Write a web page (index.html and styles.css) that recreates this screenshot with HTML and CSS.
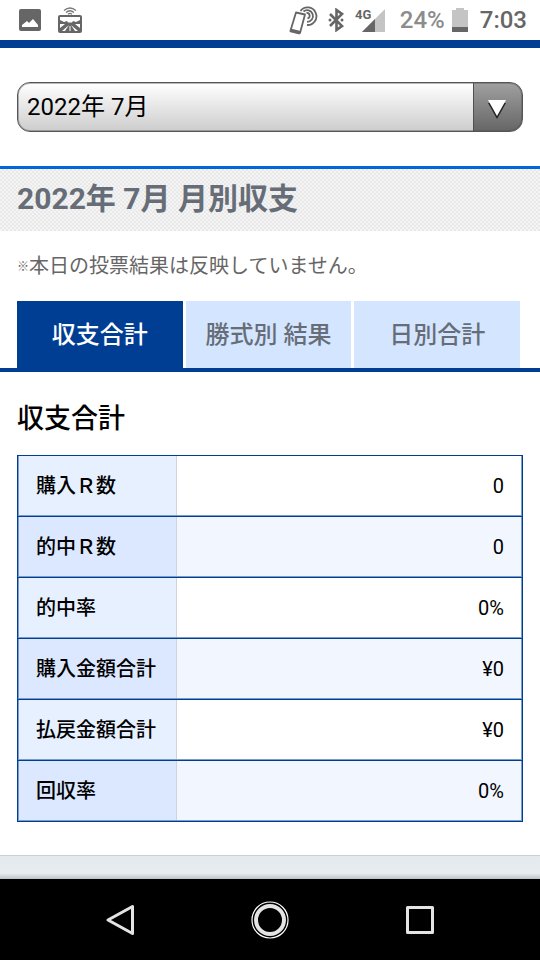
FILE: index.html
```html
<!DOCTYPE html>
<html lang="ja">
<head>
    <meta charset="UTF-8">
    <meta name="viewport" content="width=device-width, initial-scale=1.0">
    <title>月別収支</title>
    <link rel="stylesheet" href="styles.css">
</head>
<body>
    <div class="status-bar">
        <div class="status-left">
            <svg width="22" height="22" viewBox="0 0 22 22">
                <rect width="22" height="22" rx="2" fill="#666"/>
                <path d="M3 18v-2l5-4 2 2 4-4 5 6v2z" fill="#fff"/>
            </svg>
            <svg width="24" height="26" viewBox="0 0 24 26">
                <g fill="none" stroke="#777" stroke-width="1.3">
                    <path d="M6 3.500Q12-1.500 18 3.500M8 5.500Q12 2 16 5.500M10 7.300Q12 5.500 14 7.300"/>
                </g>
                <rect x="1" y="9" width="22" height="16" rx="1" fill="#666" stroke="#666" stroke-width="2"/>
                <path d="M2 10h20v3l-4 2-3-1-1 1.500h-4L9 14l-3 1-4-2z" fill="#fff"/>
                <path d="M2 17l5 0-5 4zM22 17h-5l5 4zM4 24l7-6-4 6zM20 24l-7-6 4 6zM11.500 19h1v5h-1z" fill="#fff"/>
            </svg>
        </div>
        <div class="status-right">
            <svg width="30" height="30" viewBox="0 0 30 30">
                <g fill="none" stroke="#666" stroke-width="1.8" stroke-linejoin="round">
                    <path d="M7 7.500L16 9.500L11 28L1.500 25.500z"/>
                    <path d="M11.500 6A8.800 8.800 0 1 1 18 20"/>
                    <path d="M14.500 6.500A5.800 5.800 0 1 1 18 16.800"/>
                    <path d="M17.500 8A2.800 2.800 0 0 1 18.500 13.500"/>
                </g>
                <path d="M1.500 23.500l10 2.500-1 3.500-10-2.500z" fill="#666"/>
            </svg>
            <svg class="bluetooth" width="16" height="24" viewBox="0 0 16 24">
                <path d="M2 6l12 12-5.500 4V2L14 6 2 18" fill="none" stroke="#666" stroke-width="2.600"/>
                <circle cx="2" cy="12" r="1.500" fill="#666"/>
                <circle cx="14" cy="12" r="1.500" fill="#666"/>
            </svg>
            <svg class="signal" width="31" height="26" viewBox="0 0 31 26">
                <path d="M30 2v23H7z" fill="#c4c4c4"/>
                <path d="M20 12v13H7z" fill="#666"/>
                <text x="0" y="12" class="signal-label">4G</text>
            </svg>
            <span class="battery-text">24%</span>
            <svg class="battery" width="16" height="24" viewBox="0 0 16 24">
                <path d="M4 0h8v2h4v22H0V2h4z" fill="#c4c4c4"/>
                <path d="M0 19h16v5H0z" fill="#666"/>
            </svg>
            <span class="clock">7:03</span>
        </div>
    </div>

    <main class="page">
        <div class="month-area">
            <div class="month-select">
                <select aria-label="年月">
                    <option>2022年 7月</option>
                </select>
                <svg class="arrow" width="20" height="22" viewBox="0 0 20 22">
                    <path d="M1 5h18l-9 16z" fill="#222"/>
                    <path d="M1 2h18l-9 16z" fill="#fff"/>
                </svg>
            </div>
        </div>

        <h1 class="page-title">2022年 7月 月別収支</h1>
        <p class="note"><span class="note-mark">※</span>本日の投票結果は反映していません。</p>

        <nav class="tabs">
            <a href="#total" class="tab active">収支合計</a>
            <a href="#type" class="tab">勝式別 結果</a>
            <a href="#daily" class="tab">日別合計</a>
        </nav>

        <section class="result" id="total">
            <h2>収支合計</h2>
            <table class="result-table">
                <tr><th scope="row">購入Ｒ数</th><td>0</td></tr>
                <tr><th scope="row">的中Ｒ数</th><td>0</td></tr>
                <tr><th scope="row">的中率</th><td>0%</td></tr>
                <tr><th scope="row">購入金額合計</th><td>¥0</td></tr>
                <tr><th scope="row">払戻金額合計</th><td>¥0</td></tr>
                <tr><th scope="row">回収率</th><td>0%</td></tr>
            </table>
        </section>
    </main>

    <div class="page-footer"></div>

    <div class="nav-bar">
        <button type="button" aria-label="戻る">
            <svg width="40" height="40" viewBox="0 0 40 40">
                <path d="M32.500 6.500v27L8 20z" fill="none" stroke="#e4e4e4" stroke-width="3" stroke-linejoin="round"/>
            </svg>
        </button>
        <button type="button" aria-label="ホーム">
            <svg width="40" height="40" viewBox="0 0 40 40">
                <circle cx="20" cy="20" r="18" fill="none" stroke="#fff" stroke-width="1.200"/>
                <circle cx="20" cy="20" r="14" fill="none" stroke="#e4e4e4" stroke-width="4"/>
            </svg>
        </button>
        <button type="button" aria-label="アプリ一覧">
            <svg width="40" height="40" viewBox="0 0 40 40">
                <rect x="7.500" y="7.500" width="25" height="25" fill="none" stroke="#e4e4e4" stroke-width="3" stroke-linejoin="round"/>
            </svg>
        </button>
    </div>
</body>
</html>
```
FILE: styles.css
```css
* {
    margin: 0;
    padding: 0;
    box-sizing: border-box;
}

body {
    display: flex;
    flex-direction: column;
    min-height: 100vh;
    background: #fff;
    color: #000;
    font-family: Roboto, "Noto Sans CJK JP", sans-serif;
}

svg {
    display: block;
}

/* status bar */
.status-bar {
    display: flex;
    justify-content: space-between;
    height: 48px;
    padding: 0 13px 0 19px;
    border-bottom: 8px solid #003e94;
    color: #666;
    font-size: 24px;
    font-weight: 500;
    line-height: 44px;
}

.status-left,
.status-right {
    display: flex;
    align-items: center;
}

.status-left {
    gap: 17px;
}

.bluetooth {
    margin-left: 9px;
}

.signal {
    margin-left: 11px;
}

.signal-label {
    fill: #666;
    font-size: 13px;
    font-weight: 700;
}

.battery-text {
    margin-left: 14px;
    color: #8c8c8c;
}

.battery {
    margin-left: 7px;
}

.clock {
    margin-left: 12px;
}

/* month select */
.month-area {
    padding: 34px 17px;
}

.month-select {
    position: relative;
}

.month-select select {
    display: block;
    width: 100%;
    height: 50px;
    padding: 0 60px 0 9px;
    appearance: none;
    border: 1px solid #555;
    border-radius: 13px;
    background:
        linear-gradient(#505050, #505050) right 48px top / 1px 100% no-repeat,
        linear-gradient(#a0a0a0, #666) right top / 49px 100% no-repeat,
        linear-gradient(#fff, #cdcdcd);
    box-shadow: inset 0 0 0 1px rgba(80, 80, 80, 0.4);
    color: #000;
    font-family: inherit;
    font-size: 24px;
}

.month-select .arrow {
    position: absolute;
    top: 16px;
    right: 16px;
    pointer-events: none;
}

.page-title {
    height: 65px;
    padding-left: 17px;
    border-top: 3px solid #0068d8;
    background: repeating-conic-gradient(#e9e9e9 0 25%, #f4f4f4 0 50%) 0 0 / 4px 4px;
    color: #666d77;
    font-size: 30px;
    font-weight: 700;
    line-height: 60px;
}

.note {
    padding: 19px 17px;
    color: #666;
    font-size: 20px;
    line-height: 32px;
}

.note-mark {
    font-size: 12px;
    font-weight: 700;
    line-height: 1;
    vertical-align: 2px;
}

/* tabs */
.tabs {
    display: grid;
    grid-template-columns: repeat(3, 1fr);
    gap: 3px;
    padding: 0 20px 0 17px;
    border-bottom: 4px solid #003e94;
}

.tab {
    padding-top: 2px;
    background: #d4e5ff;
    color: #666d77;
    font-size: 24px;
    font-weight: 500;
    line-height: 65px;
    text-align: center;
    text-decoration: none;
}

.tab.active {
    background: #003e94;
    color: #fff;
}

/* result table */
.result {
    padding: 27px 17px 33px;
}

.result h2 {
    margin-bottom: 16px;
    font-size: 27px;
    font-weight: 500;
    line-height: 40px;
}

.result-table {
    width: 100%;
    border: 1px solid #003e94;
    border-bottom: 0;
    border-spacing: 0;
}

.result-table th,
.result-table td {
    height: 61px;
    padding: 0 18px;
    border-bottom: 1px solid #003e94;
    font-size: 20px;
    line-height: 24px;
}

.result-table th {
    width: 159px;
    background: #e6f0ff;
    box-shadow: inset 1px 0 #7a9cca, inset 0 -1px #7a9cca, inset -1px 0 #d0d4da;
    font-weight: 500;
    text-align: left;
    white-space: nowrap;
}

.result-table td {
    box-shadow: inset -1px 0 #7a9cca, inset 0 -1px #7a9cca;
    text-align: right;
}

.result-table tr:nth-child(even) th {
    background: #dce8ff;
}

.result-table tr:nth-child(even) td {
    background: #f2f7ff;
}

/* footer and android buttons */
.page-footer {
    height: 24px;
    border-top: 1px solid #ccd0d3;
    background: linear-gradient(#e3e9ed, #e6ecf0 75%, #bcc3c6);
}

.nav-bar {
    display: flex;
    flex-grow: 1;
    align-items: center;
    justify-content: center;
    gap: 110px;
    min-height: 81px;
    background: #000;
}

.nav-bar button {
    border: 0;
    background: none;
}
```
